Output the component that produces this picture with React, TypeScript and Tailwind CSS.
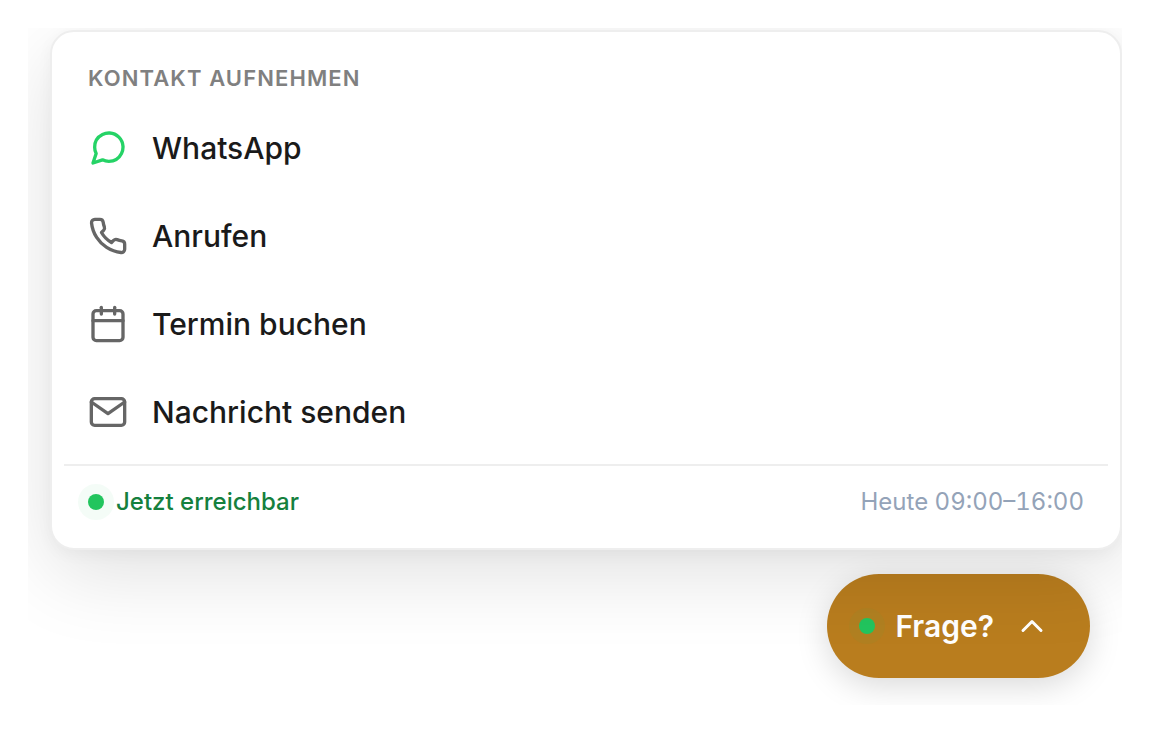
import React from "react";
import { FiCalendar, FiChevronUp, FiMail, FiMessageCircle, FiPhone } from "react-icons/fi";

const contacts = [
  { label: "WhatsApp", href: "#whatsapp", icon: FiMessageCircle, color: "text-[#25d366]" },
  { label: "Anrufen", href: "#anrufen", icon: FiPhone, color: "text-[#666666]" },
  { label: "Termin buchen", href: "#termin", icon: FiCalendar, color: "text-[#666666]" },
  { label: "Nachricht senden", href: "#nachricht", icon: FiMail, color: "text-[#666666]" },
];

function ContactMenu() {
  return (
    <div className="relative z-10 rounded-3xl border-2 border-[#eeeeee] bg-white p-3 shadow-[0_24px_80px_rgba(0,0,0,0.12),0_4px_16px_rgba(0,0,0,0.04)]">
      <h2 className="px-6 pt-5 pb-3 text-[22px] leading-7 font-semibold tracking-wider text-[#808080] uppercase">
        Kontakt aufnehmen
      </h2>
      <nav>
        {contacts.map((item) => (
          <a
            key={item.label}
            href={item.href}
            className="flex h-22 items-center gap-6 rounded-2xl px-6 text-[30px] leading-10 font-medium text-[#1a1a1a]"
          >
            <item.icon className={item.color} size={40} strokeWidth={2} />
            {item.label}
          </a>
        ))}
      </nav>
      <div className="mt-2 flex items-center justify-between border-t-2 border-[#eeeeee] px-6 pt-4 pb-3.5 text-2xl leading-10">
        <p className="flex items-center gap-3 font-medium text-[#15803d]">
          <span className="size-4 rounded-full bg-[#22c55e] shadow-[0_0_0_10px_rgba(34,197,94,0.05)]"></span>
          Jetzt erreichbar
        </p>
        <p className="text-[#94a3b8] tabular-nums">Heute 09:00–16:00</p>
      </div>
    </div>
  );
}

export default function App() {
  return (
    <div className="flex min-h-screen flex-col bg-white p-7 font-['Inter',sans-serif]">
      <main className="grow overflow-hidden pt-0.5 pl-[22px]">
        <ContactMenu />
        <div className="mt-6 flex justify-end pr-8">
          <button
            type="button"
            aria-expanded="true"
            className="flex h-26 items-center gap-5 rounded-full bg-[#b97d1e] pr-10 pl-8 text-[30px] leading-10 font-semibold text-white shadow-[0_8px_32px_rgba(0,0,0,0.15)]"
          >
            <span className="size-4 rounded-full bg-[#22c55e] shadow-[0_0_0_10px_rgba(34,197,94,0.05)]"></span>
            Frage?
            <FiChevronUp size={36} />
          </button>
        </div>
      </main>
    </div>
  );
}
